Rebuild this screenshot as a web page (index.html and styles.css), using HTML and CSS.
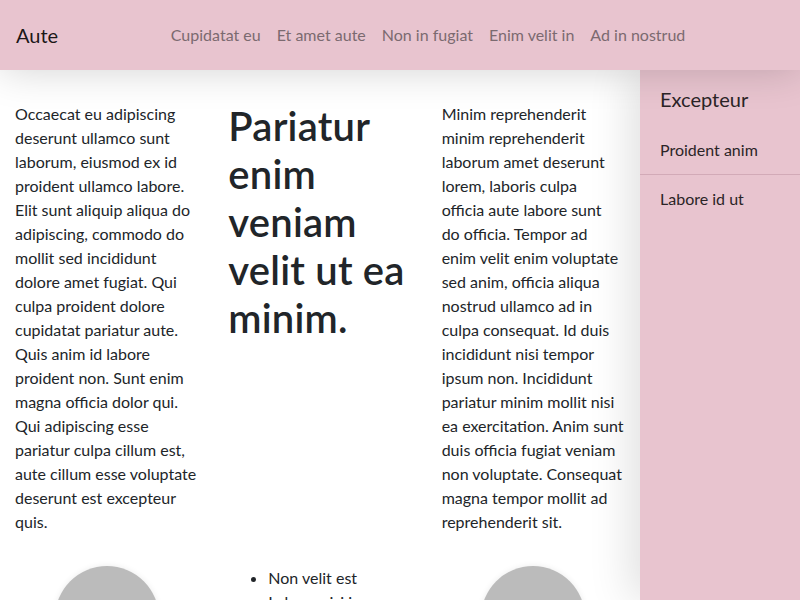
FILE: index.html
```html
<!DOCTYPE html>
<html lang="la">
<head>
<meta charset="utf-8">
<title>Aute</title>
<link rel="stylesheet" href="styles.css">
</head>
<body>
<header class="topbar">
  <a class="brand" href="#">Aute</a>
  <nav class="nav">
    <a href="#">Cupidatat eu</a>
    <a href="#">Et amet aute</a>
    <a href="#">Non in fugiat</a>
    <a href="#">Enim velit in</a>
    <a href="#">Ad in nostrud</a>
  </nav>
</header>
<div class="layout">
  <main class="content">
    <p class="col-text">Occaecat eu adipiscing deserunt ullamco sunt laborum, eiusmod ex id proident ullamco labore. Elit sunt aliquip aliqua do adipiscing, commodo do mollit sed incididunt dolore amet fugiat. Qui culpa proident dolore cupidatat pariatur aute. Quis anim id labore proident non. Sunt enim magna officia dolor qui. Qui adipiscing esse pariatur culpa cillum est, aute cillum esse voluptate deserunt est excepteur quis.</p>
    <h1 class="headline">Pariatur enim veniam velit ut ea minim.</h1>
    <p class="col-text">Minim reprehenderit minim reprehenderit laborum amet deserunt lorem, laboris culpa <span class="keep">officia aute labore sunt</span> <span class="keep">do officia. Tempor ad</span> <span class="keep">enim velit enim voluptate</span> sed anim, officia aliqua nostrud ullamco ad in culpa consequat. Id duis incididunt nisi tempor ipsum non. Incididunt pariatur minim mollit nisi ea exercitation. Anim sunt duis officia fugiat veniam non voluptate. Consequat magna tempor mollit ad reprehenderit sit.</p>
    <div class="cell-center"><div class="circle"></div></div>
    <ul class="list">
      <li>Non velit est</li>
      <li>Labore nisi ipsum</li>
      <li>Dolor sed enim</li>
    </ul>
    <div class="cell-center"><div class="circle"></div></div>
  </main>
  <aside class="sidebar">
    <div class="side-title">Excepteur</div>
    <a class="side-item" href="#">Proident anim</a>
    <a class="side-item" href="#">Labore id ut</a>
  </aside>
</div>
</body>
</html>
```

FILE: styles.css
```css
html, body {
  margin: 0;
  padding: 0;
  height: 100%;
  overflow: hidden;
}
body {
  font-family: "Segoe UI", Lato, "Liberation Sans", sans-serif;
  font-size: 16px;
  line-height: 24px;
  color: #212529;
  background: #ffffff;
}
a {
  text-decoration: none;
}
.topbar {
  position: relative;
  z-index: 3;
  height: 70px;
  box-sizing: border-box;
  display: flex;
  align-items: center;
  padding: 0 16px;
  background: #e8c4cf;
  box-shadow: 0 0 40px rgba(0, 0, 0, 0.18);
}
.brand {
  font-size: 20px;
  line-height: 30px;
  color: rgba(0, 0, 0, 0.9);
  margin-right: 14px;
}
.nav {
  flex: 1;
  display: flex;
  justify-content: center;
}
.nav a {
  padding: 0 8px;
  color: #7b6a70;
  font-size: 16px;
}
.layout {
  display: flex;
  height: calc(100% - 70px);
}
.content {
  flex: 1;
  display: grid;
  grid-template-columns: repeat(3, 1fr);
  grid-template-rows: auto auto;
  row-gap: 32px;
  padding: 32px 0 0;
  align-content: start;
}
.col-text {
  margin: 0;
  padding: 0 15px;
}
.keep {
  white-space: nowrap;
}
.headline {
  margin: 0;
  padding: 0 15px;
  font-size: 40px;
  line-height: 48px;
  font-weight: 600;
  letter-spacing: 0.2px;
  color: #212529;
}
.cell-center {
  display: flex;
  justify-content: center;
}
.circle {
  width: 104px;
  height: 104px;
  border-radius: 50%;
  background: #bbbbbb;
  box-shadow: 0 0 6px rgba(0, 0, 0, 0.08);
}
.list {
  margin: 0;
  padding: 0 15px 0 55px;
}
.sidebar {
  position: relative;
  z-index: 2;
  width: 160px;
  flex-shrink: 0;
  background: #e8c4cf;
  box-shadow: -10px 0 40px rgba(0, 0, 0, 0.12);
  display: flex;
  flex-direction: column;
}
.side-title {
  font-size: 20px;
  line-height: 30px;
  padding: 14px 20px 12px;
  color: #2b2427;
}
.side-item {
  padding: 12px 20px;
  color: #2b2427;
  border-bottom: 1px solid #d2aab7;
}
.side-item:last-child {
  border-bottom: none;
}
```
